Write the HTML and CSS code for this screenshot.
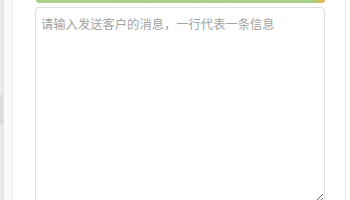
FILE: index.html
```html
<!DOCTYPE html>
<html lang="zh-CN">
<head>
    <meta charset="UTF-8">
    <meta name="viewport" content="width=device-width, initial-scale=1.0">
    <title>发送消息</title>
    <link rel="stylesheet" href="styles.css">
</head>
<body>
    <div class="page">
        <div class="rail">
            <div class="rail-thumb"></div>
        </div>
        <div class="gutter"></div>
        <div class="panel">
            <div class="progress"></div>
            <textarea class="message" placeholder="请输入发送客户的消息，一行代表一条信息"></textarea>
        </div>
    </div>
</body>
</html>
```

FILE: styles.css
```css
body {
    margin: 0;
    font-family: "Liberation Sans", "Noto Sans CJK SC", sans-serif;
    background-color: #fff;
    overflow: hidden;
}

.page {
    display: flex;
    height: 200px;
    overflow: hidden;
}

.rail {
    width: 3px;
    background-color: #ebebeb;
    border-right: 1px solid #e2e2e2;
    padding-top: 95px;
}

.rail-thumb {
    height: 30px;
    background-color: #dcdcdc;
}

.gutter {
    width: 8px;
    background-color: #fafafa;
}

.panel {
    width: 334px;
    border-left: 1px solid #ececec;
    border-right: 1px solid #ececec;
    padding-left: 22px;
    box-sizing: border-box;
    display: flex;
    flex-direction: column;
}

.progress {
    flex-shrink: 0;
    width: 289px;
    height: 3px;
    margin-left: 1px;
    border-radius: 0 0 3px 3px;
    background: linear-gradient(to right, #a9d28c 0%, #a6cf87 96%, #f3b540 100%);
}

.message {
    width: 290px;
    height: 196px;
    flex-shrink: 0;
    margin: 4px 0 0 0;
    padding: 9px 5px;
    box-sizing: border-box;
    border: 1px solid #e0e0e0;
    border-radius: 4px;
    font-family: "Liberation Sans", "Noto Sans CJK SC", sans-serif;
    font-size: 12.3px;
    line-height: 1.4;
    color: #333;
    outline: none;
}

.message::placeholder {
    color: #a2a2a2;
}
```
